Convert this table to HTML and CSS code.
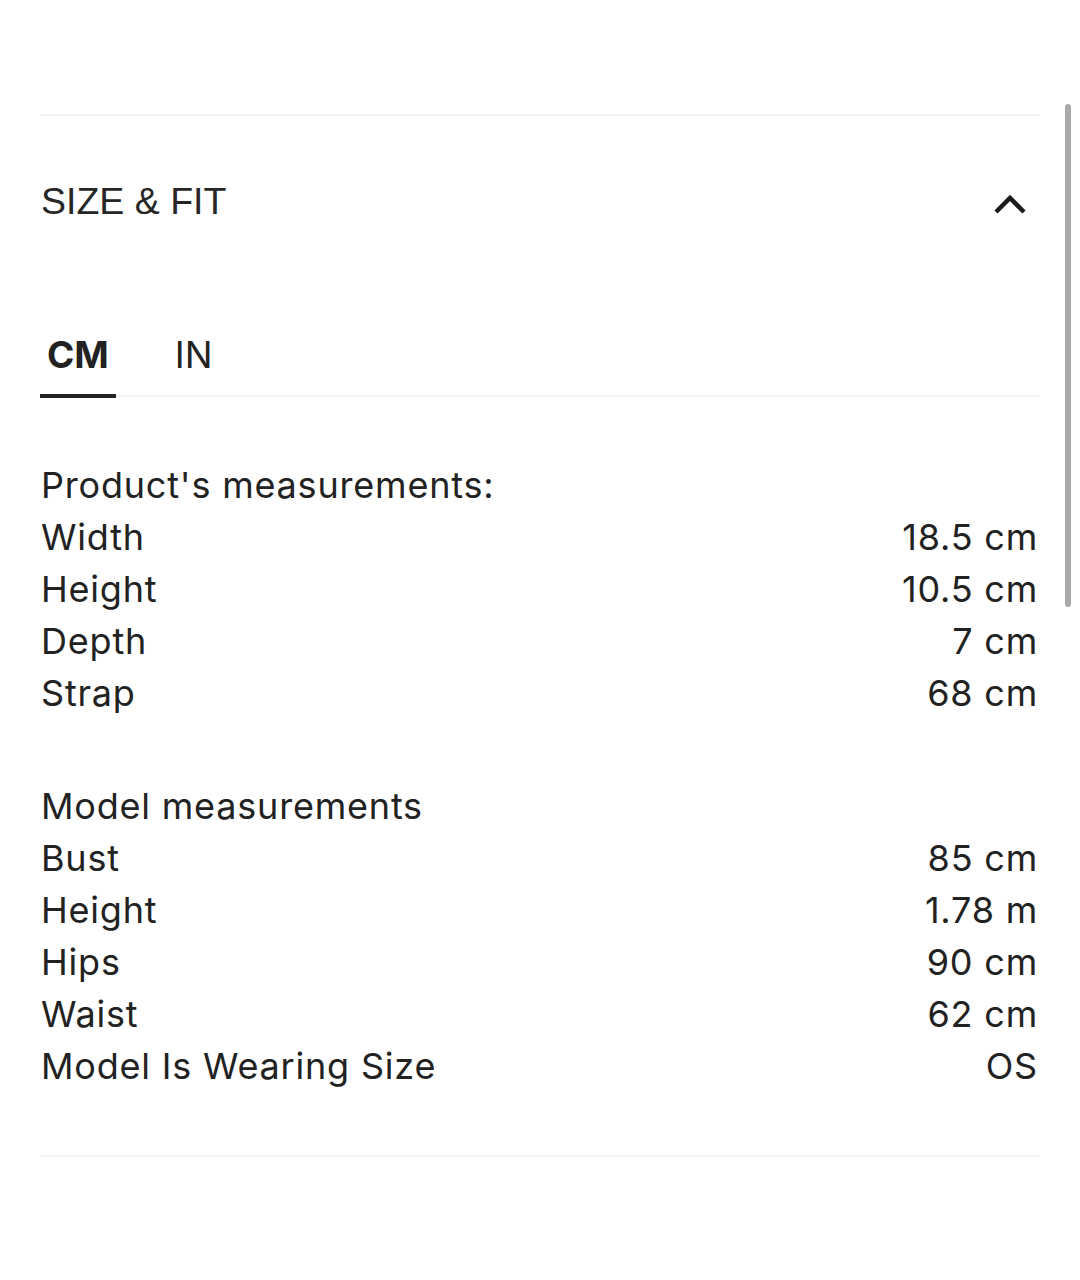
FILE: index.html
```html
<!DOCTYPE html>
<html lang="en">
<head>
    <meta charset="UTF-8" />
    <meta name="viewport" content="width=device-width, initial-scale=1.0" />
    <title>Size &amp; Fit</title>
    <link rel="stylesheet" href="styles.css">
</head>
<body>
    <div class="page">
        <section class="accordion">
            <div class="acc-head">
                <h2 class="acc-title">SIZE &amp; FIT</h2>
                <svg class="chevron" width="34" height="22" viewBox="0 0 34 22">
                    <polyline points="3,19 17,5 31,19" fill="none" stroke="#1a1a1a" stroke-width="4.5" />
                </svg>
            </div>

            <div class="tabs">
                <button class="tab active">CM</button>
                <button class="tab">IN</button>
            </div>

            <div class="measures">
                <div class="group">
                    <div class="group-title">Product's measurements:</div>
                    <div class="row"><span>Width</span><span>18.5 cm</span></div>
                    <div class="row"><span>Height</span><span>10.5 cm</span></div>
                    <div class="row"><span>Depth</span><span>7 cm</span></div>
                    <div class="row"><span>Strap</span><span>68 cm</span></div>
                </div>

                <div class="group">
                    <div class="group-title">Model measurements</div>
                    <div class="row"><span>Bust</span><span>85 cm</span></div>
                    <div class="row"><span>Height</span><span>1.78 m</span></div>
                    <div class="row"><span>Hips</span><span>90 cm</span></div>
                    <div class="row"><span>Waist</span><span>62 cm</span></div>
                    <div class="row"><span>Model Is Wearing Size</span><span>OS</span></div>
                </div>
            </div>
        </section>
    </div>

    <div class="scrollbar"></div>
</body>
</html>
```

FILE: styles.css
```css
body {
    margin: 0;
    background-color: #ffffff;
    color: #222222;
    font-family: Inter, "Noto Sans", sans-serif;
}

.page {
    padding: 114px 40px 0;
}

.accordion {
    border-top: 2px solid #f2f2f2;
    border-bottom: 2px solid #f2f2f2;
    padding-bottom: 63px;
}

.acc-head {
    height: 170px;
    display: flex;
    align-items: center;
    justify-content: space-between;
}

.acc-title {
    margin: 0;
    font-family: "Liberation Sans", Arial, sans-serif;
    font-weight: normal;
    font-size: 37.5px;
    color: #262626;
    padding-left: 1px;
}

.chevron {
    margin-right: 13px;
    margin-top: 6px;
}

.tabs {
    display: flex;
    gap: 52px;
    margin-top: 47px;
    border-bottom: 2px solid #f2f2f2;
}

.tab {
    background: none;
    border: none;
    border-bottom: 4px solid transparent;
    margin-bottom: -3px;
    padding: 0 7px 17px;
    font-family: Inter, "Noto Sans", sans-serif;
    font-size: 37px;
    line-height: 44px;
    color: #222222;
    cursor: pointer;
}

.tab.active {
    font-weight: bold;
    border-bottom-color: #222222;
}

.measures {
    padding-top: 62px;
}

.group + .group {
    margin-top: 61px;
}

.group-title,
.row {
    font-size: 36px;
    line-height: 52px;
    letter-spacing: 0.8px;
    padding-left: 1px;
}

.row {
    display: flex;
    justify-content: space-between;
    padding-right: 2px;
}

.scrollbar {
    position: fixed;
    top: 104px;
    left: 1065px;
    width: 6px;
    height: 503px;
    background-color: #a9a9a9;
    border-radius: 3px;
}
```
